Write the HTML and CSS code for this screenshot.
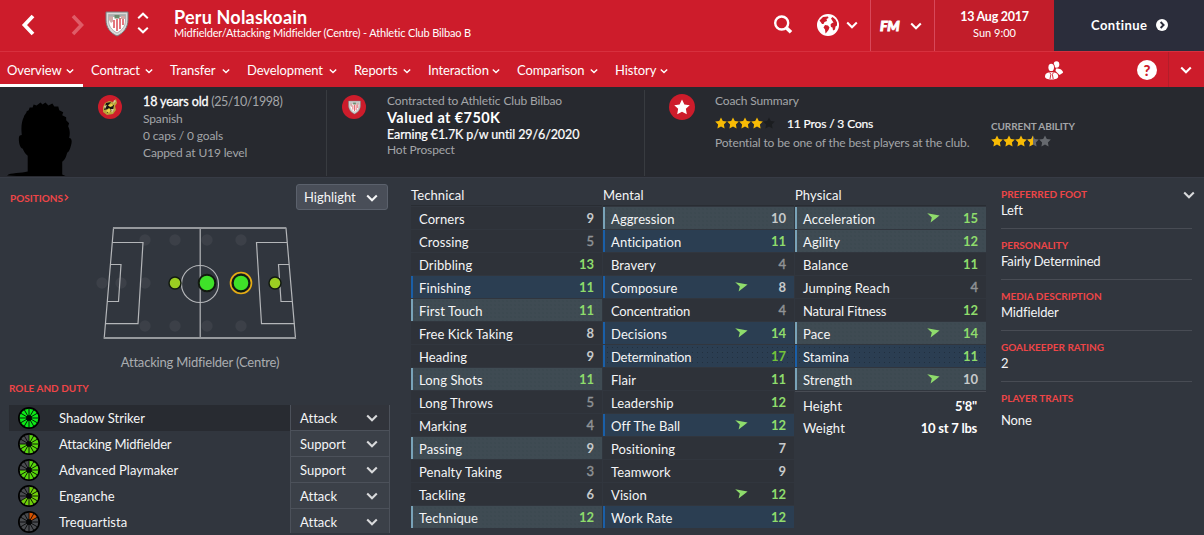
FILE: index.html
```html
<!DOCTYPE html>
<html lang="en">
<head>
<meta charset="utf-8">
<title>Peru Nolaskoain</title>
<link rel="stylesheet" href="styles.css">
</head>
<body>
<svg class="defs" aria-hidden="true">
  <symbol id="chev" viewBox="0 0 12 8"><path d="M1.200 1.600 6 6.200l4.800-4.600" fill="none" stroke="currentColor" stroke-width="2.100"/></symbol>
  <symbol id="arrow" viewBox="0 0 13 10"><path d="M.2.3 12.600 2.400 3.600 9.400 4.800 4.600z" fill="#8fdc6c"/></symbol>
  <symbol id="star" viewBox="0 0 12 12"><path d="M6 .4 7.800 4.100l4 .5-2.900 2.800.7 4L6 9.500l-3.600 1.900.7-4L.2 4.600l4-.5z" fill="currentColor"/></symbol>
  <symbol id="crest" viewBox="0 0 24 26">
    <path d="M1 1h22v8c0 7-4 13-11 16C5 22 1 16 1 9z" fill="#d9dad8" stroke="#77797b" stroke-width="1"/>
    <path d="M3.500 3.500h17v5.500c0 6-3 10-8.500 13C6.500 19 3.500 15 3.500 9z" fill="#fff" stroke="#999" stroke-width=".7"/>
    <path d="M9 9v8M12 8v12M15 7v11M18 7v7" stroke="#dc4b55" stroke-width="1.500"/>
    <path d="M4 4h16v2H4z" fill="#a9aeae"/><path d="M9.500 4h5v3.500h-5z" fill="#6d8a6d"/><path d="M4 5.500h4v5L6 12 4 9zM16 5h4v3h-4z" fill="#d4aaa7"/>
  </symbol>
  <symbol id="spokes" viewBox="0 0 22 22"><g stroke="#050607" stroke-width=".9"><path d="M11 1v20M1 11h20M6 2.340l10 17.320M2.340 6l17.320 10M2.340 16 19.660 6M6 19.660 16 2.340"/></g><circle cx="11" cy="11" r="2.600" fill="#050607"/></symbol>
</svg>

<header class="top">
  <div class="back"><svg width="14" height="22" viewBox="0 0 14 22"><path d="M12 2 3.500 11l8.500 9" fill="none" stroke="#fff" stroke-width="3.800"/></svg></div>
  <div class="fwd"><svg width="14" height="22" viewBox="0 0 14 22"><path d="M2 2l8.500 9L2 20" fill="none" stroke="#df5c67" stroke-width="3.600"/></svg></div>
  <svg class="club" width="24" height="26"><use href="#crest"/></svg>
  <svg class="updown" width="12" height="22" viewBox="0 0 12 22" fill="none" stroke="#fff" stroke-width="2"><path d="M1.200 6.300 6 1.700l4.800 4.600M1.200 15.700 6 20.300l4.800-4.600"/></svg>
  <div class="who"><h1>Peru Nolaskoain</h1><p>Midfielder/Attacking Midfielder (Centre) - Athletic Club Bilbao B</p></div>
  <div class="tools">
    <svg width="20" height="20" viewBox="0 0 20 20" fill="none" stroke="#fff"><circle cx="8.700" cy="8" r="6.500" stroke-width="2.400"/><path d="M13 12.500l5 4.800" stroke-width="3.600"/></svg>
    <svg class="globe" width="22" height="22" viewBox="0 0 22 22"><circle cx="11" cy="11" r="11" fill="#fff"/><path d="M2.500 6.500 6 3l5-.5.5 1.500-2 1 .5 2-2.500 1-1 2H5L4 8.500zM8 11l3 .5 1.500 2-1 2.500-2 2.500-1 1-.5-4-1.500-2zM14 4.500l1.500-1.500 3 2.500 1.500 3v3l-1.500 1-.5 3-2 1-.5-3-1.500-.5-.5-2.500 1.500-1.500 1.500-.5-1-1.500z" fill="#cd1c2b"/></svg>
    <svg class="chev-top" width="12" height="8"><use href="#chev"/></svg>
  </div>
  <div class="fm"><b>FM</b><svg width="12" height="8"><use href="#chev"/></svg></div>
  <div class="date"><b>13 Aug 2017</b><span>Sun 9:00</span></div>
  <div class="continue"><b>Continue</b><svg width="12" height="12" viewBox="0 0 12 12"><circle cx="6" cy="6" r="6" fill="#fff"/><path d="M4.600 3l3 3-3 3" fill="none" stroke="#2b2d3b" stroke-width="1.900"/></svg></div>
</header>

<nav class="nav">
  <a class="n1 on">Overview<svg><use href="#chev"/></svg></a>
  <a class="n2">Contract<svg><use href="#chev"/></svg></a>
  <a class="n3">Transfer<svg><use href="#chev"/></svg></a>
  <a class="n4">Development<svg><use href="#chev"/></svg></a>
  <a class="n5">Reports<svg><use href="#chev"/></svg></a>
  <a class="n6">Interaction<svg><use href="#chev"/></svg></a>
  <a class="n7">Comparison<svg><use href="#chev"/></svg></a>
  <a class="n8">History<svg><use href="#chev"/></svg></a>
  <div class="nav-icons">
    <svg class="people" width="18" height="19" viewBox="0 0 18 19" fill="#fff"><ellipse cx="11.500" cy="3.500" rx="2.800" ry="3.300"/><path d="M11 7.500c4 0 7 1.500 7 4.200L14.500 14l-4-4z"/><ellipse cx="6.200" cy="6.500" rx="3.700" ry="4.500" fill="#cd1c2b"/><ellipse cx="6.200" cy="6.400" rx="2.800" ry="3.700"/><path d="M0 15.500c0-3 2.500-4.200 6.500-4.200s6.700 1.200 6.700 4.200c0 1.800-2.500 3-6.700 3S0 17.300 0 15.500z"/><path d="M4.800 11.500l1 2-.8 4.500M8.400 11.500l-1 2 .8 4.500" stroke="#cd1c2b" stroke-width=".9" fill="none"/></svg>
    <span class="help">?</span>
    <span class="more"><svg width="12" height="8"><use href="#chev"/></svg></span>
  </div>
</nav>

<section class="info">
  <svg class="face" width="72" height="80" viewBox="0 0 72 80"><path d="M0 80c3-3 15-2 21-4V60c-3-2-4-5-5-7-3-1-4-6-4-10 0-3 1-4 3-4-1-8 0-14 2-18 0-2 3-4 3-6l2-1 1-3 3 0 1-3 3 1 4-3 2 2 3-2 3 3 4-2 2 3 4 0 1 4 4 2-1 3 4 2 0 3 3 3-1 3c2 4 2 8 1 12 3 0 3 4 2 7-1 4-2 7-4 8-1 4-2 7-5 9v13c5 3 11 3 15 5z" fill="#000"/></svg>
  <div class="card bio">
    <div class="disc"><svg width="16" height="18" viewBox="0 0 16 18"><path d="M3 5 7 3l4 1 3-3 1 4-2 3 1 4-3 4-6 1-4-3V9z" fill="#b9a33a"/><path d="M4 5l5-1-3 4 6-1-1 5-6 3 1-4-4 1z" fill="#161512"/><path d="M12 2l2 1-3 3zM2 8l3-1-2 4zM9 11l3 0-2 4z" fill="#d8c8a0"/><path d="M4 13l3-3 2 2-2 3zM6 7l4-1 1 2-3 1z" fill="#ecd94b"/></svg></div>
    <div><p class="lead"><b>18 years old</b> (25/10/1998)</p><p>Spanish</p><p>0 caps / 0 goals</p><p>Capped at U19 level</p></div>
  </div>
  <div class="card deal">
    <div class="disc"><svg width="13" height="15"><use href="#crest"/></svg></div>
    <div><p>Contracted to Athletic Club Bilbao</p><p class="value">Valued at €750K</p><p class="wage">Earning €1.7K p/w until 29/6/2020</p><p>Hot Prospect</p></div>
  </div>
  <div class="card coach">
    <div class="disc big"><svg width="16" height="16" viewBox="0 0 12 12"><use href="#star"/></svg></div>
    <div><p>Coach Summary</p>
      <p class="pros"><span class="stars"><svg><use href="#star"/></svg><svg><use href="#star"/></svg><svg><use href="#star"/></svg><svg><use href="#star"/></svg><svg class="dark"><use href="#star"/></svg></span><span>11 Pros / 3 Cons</span></p>
      <p class="potential">Potential to be one of the best players at the club.</p></div>
  </div>
  <div class="ability"><b>CURRENT ABILITY</b><span class="stars"><svg><use href="#star"/></svg><svg><use href="#star"/></svg><svg><use href="#star"/></svg><svg class="half" viewBox="0 0 12 12"><path d="M6 .4 7.800 4.100l4 .5-2.900 2.800.7 4L6 9.500l-3.600 1.900.7-4L.2 4.600l4-.5z" fill="#66696e"/><path d="M6 .4V9.500l-3.600 1.900.7-4L.2 4.600l4-.5z" fill="#f8bb05"/></svg><svg class="grey"><use href="#star"/></svg></span></div>
</section>

<main class="main">
  <section class="left">
    <div class="pos-head"><h2>POSITIONS<svg width="5" height="7" viewBox="0 0 5 7"><path d="M1 .7l2.800 2.800L1 6.300" fill="none" stroke="currentColor" stroke-width="1.400"/></svg></h2><div class="highlight">Highlight<svg width="12" height="8"><use href="#chev"/></svg></div></div>
    <svg class="pitch" width="216" height="124" viewBox="90 220 216 124">
      <g fill="#3c4048"><circle cx="145" cy="240" r="5.700"/><circle cx="175" cy="240" r="5.700"/><circle cx="207" cy="240" r="5.700"/><circle cx="241" cy="240" r="5.700"/><circle cx="102" cy="283" r="5.700"/><circle cx="121" cy="283" r="5.700"/><circle cx="145" cy="283" r="5.700"/><circle cx="145" cy="326" r="5.700"/><circle cx="175" cy="326" r="5.700"/><circle cx="207" cy="326" r="5.700"/><circle cx="241" cy="326" r="5.700"/></g>
      <g fill="none" stroke="#b4b6b9" stroke-width="1.200"><path d="M113.500 228H286l9.500 110.200H104.200z"/><path d="M200.200 228v110"/><path d="M112 242.500h31l-5 81.200h-33M110 264.500h11l-2.500 37H107M287 242.500h-30.500l5 81.200h33M289 264.500h-10.500l2.500 37h11"/><circle cx="200" cy="284" r="18.500"/></g>
      <path d="M113 228h173M104 338h192" stroke="#96999d" stroke-width="2"/>
      <g stroke="#121a10" stroke-width="1.500"><circle cx="175" cy="283" r="6" fill="#9bcd22"/><circle cx="275" cy="283" r="6" fill="#9bcd22"/><circle cx="207" cy="283" r="8.300" fill="#3fe229" stroke-width="2"/><circle cx="241" cy="283" r="8.300" fill="#3fe229" stroke-width="2"/></g>
      <circle cx="241" cy="283" r="10.500" fill="none" stroke="#e7ad12" stroke-width="1.600"/>
    </svg>
    <p class="pos-name">Attacking Midfielder (Centre)</p>
    <h2 class="role-title">ROLE AND DUTY</h2>
    <div class="roles">
      <div class="role sel"><svg class="wheel" viewBox="0 0 22 22"><circle cx="11" cy="11" r="11"/><circle class="w f12" cx="11" cy="11" r="6"/><use href="#spokes"/></svg><span>Shadow Striker</span><div class="duty">Attack<svg><use href="#chev"/></svg></div></div>
      <div class="role"><svg class="wheel" viewBox="0 0 22 22"><circle cx="11" cy="11" r="11"/><circle class="w" cx="11" cy="11" r="6"/><circle class="w f9" pathLength="12" cx="11" cy="11" r="6"/><use href="#spokes"/></svg><span class="tight">Attacking Midfielder</span><div class="duty">Support<svg><use href="#chev"/></svg></div></div>
      <div class="role"><svg class="wheel" viewBox="0 0 22 22"><circle cx="11" cy="11" r="11"/><circle class="w" cx="11" cy="11" r="6"/><circle class="w f9" pathLength="12" cx="11" cy="11" r="6"/><use href="#spokes"/></svg><span>Advanced Playmaker</span><div class="duty">Support<svg><use href="#chev"/></svg></div></div>
      <div class="role"><svg class="wheel" viewBox="0 0 22 22"><circle cx="11" cy="11" r="11"/><circle class="w" cx="11" cy="11" r="6"/><circle class="w f8" pathLength="12" cx="11" cy="11" r="6"/><use href="#spokes"/></svg><span>Enganche</span><div class="duty">Attack<svg><use href="#chev"/></svg></div></div>
      <div class="role"><svg class="wheel" viewBox="0 0 22 22"><circle cx="11" cy="11" r="11"/><circle class="w" cx="11" cy="11" r="6"/><circle class="w f2" pathLength="12" cx="11" cy="11" r="6"/><use href="#spokes"/></svg><span>Trequartista</span><div class="duty">Attack<svg><use href="#chev"/></svg></div></div>
    </div>
  </section>

  <section class="attrs">
    <div class="col">
      <h3>Technical</h3>
      <div class="row">Corners<b>9</b></div>
      <div class="row">Crossing<b class="low">5</b></div>
      <div class="row">Dribbling<b class="good">13</b></div>
      <div class="row key">Finishing<b class="good">11</b></div>
      <div class="row pref">First Touch<b class="good">11</b></div>
      <div class="row">Free Kick Taking<b>8</b></div>
      <div class="row">Heading<b>9</b></div>
      <div class="row pref">Long Shots<b class="good">11</b></div>
      <div class="row">Long Throws<b class="low">5</b></div>
      <div class="row">Marking<b class="low">4</b></div>
      <div class="row pref">Passing<b>9</b></div>
      <div class="row">Penalty Taking<b class="low">3</b></div>
      <div class="row">Tackling<b>6</b></div>
      <div class="row pref">Technique<b class="good">12</b></div>
    </div>
    <div class="col">
      <h3>Mental</h3>
      <div class="row pref">Aggression<b>10</b></div>
      <div class="row key">Anticipation<b class="good">11</b></div>
      <div class="row">Bravery<b class="low">4</b></div>
      <div class="row key">Composure<svg><use href="#arrow"/></svg><b>8</b></div>
      <div class="row tight">Concentration<b class="low">4</b></div>
      <div class="row key">Decisions<svg><use href="#arrow"/></svg><b class="good">14</b></div>
      <div class="row key dots tight">Determination<b class="great">17</b></div>
      <div class="row">Flair<b class="good">11</b></div>
      <div class="row">Leadership<b class="good">12</b></div>
      <div class="row key">Off The Ball<svg><use href="#arrow"/></svg><b class="good">12</b></div>
      <div class="row">Positioning<b>7</b></div>
      <div class="row">Teamwork<b>9</b></div>
      <div class="row">Vision<svg><use href="#arrow"/></svg><b class="good">12</b></div>
      <div class="row key">Work Rate<b class="good">12</b></div>
    </div>
    <div class="col">
      <h3>Physical</h3>
      <div class="row pref">Acceleration<svg><use href="#arrow"/></svg><b class="good">15</b></div>
      <div class="row pref">Agility<b class="good">12</b></div>
      <div class="row">Balance<b class="good">11</b></div>
      <div class="row">Jumping Reach<b class="low">4</b></div>
      <div class="row tight">Natural Fitness<b class="good">12</b></div>
      <div class="row pref">Pace<svg><use href="#arrow"/></svg><b class="good">14</b></div>
      <div class="row key dots">Stamina<b class="good">11</b></div>
      <div class="row pref">Strength<svg><use href="#arrow"/></svg><b>10</b></div>
      <div class="body"><div>Height<b>5'8"</b></div><div>Weight<b>10 st 7 lbs</b></div></div>
    </div>
  </section>

  <aside class="side">
    <svg class="side-chev" width="12" height="8"><use href="#chev"/></svg>
    <div class="fact"><h2>PREFERRED FOOT</h2><p>Left</p></div>
    <div class="fact"><h2>PERSONALITY</h2><p>Fairly Determined</p></div>
    <div class="fact"><h2>MEDIA DESCRIPTION</h2><p>Midfielder</p></div>
    <div class="fact"><h2>GOALKEEPER RATING</h2><p>2</p></div>
    <div class="fact traits"><h2>PLAYER TRAITS</h2><p>None</p></div>
  </aside>
</main>
</body>
</html>
```
FILE: styles.css
```css
* { box-sizing: border-box; }
body { margin: 0; width: 1204px; height: 535px; overflow: hidden; background: #31363e; color: #f4f5f6; font: 13px/17px Lato, "Liberation Sans", sans-serif; letter-spacing: .1px; }
h1, h2, h3, p { margin: 0; }
svg { display: block; flex: none; }
.defs { position: absolute; width: 0; height: 0; }

.top { display: flex; height: 51px; background: #cd1c2b; color: #fff; }
.back { padding: 14px 0 0 21px; width: 71px; }
.fwd { padding-top: 14px; width: 34px; }
.club { margin-top: 11px; }
.updown { margin: 12px 0 0 8px; }
.who { margin-left: 25px; padding-top: 7px; flex: 1; }
.who h1 { font-size: 18px; line-height: 20px; font-weight: 700; letter-spacing: .2px; }
.who p { font-size: 11px; line-height: 12px; letter-spacing: -.16px; }
.tools { display: flex; width: 97px; padding-top: 15px; }
.globe { margin: -1px 0 0 24px; }
.tools .chev-top { margin: 6px 0 0 7px; }
.fm { width: 64px; display: flex; align-items: center; gap: 8px; padding-left: 9px; background: #c21d2a; border-left: 1px solid #d8485a; }
.fm b { font: italic 900 14px/16px Lato, sans-serif; letter-spacing: -.2px; width: 22px; -webkit-text-stroke: .9px #fff; }
.date { width: 120px; border-left: 1px solid #d8485a; background: #c21d2a; text-align: center; padding-top: 8px; }
.date b { display: block; font-size: 12.500px; line-height: 18px; letter-spacing: -.25px; }
.date span { display: block; font-size: 11px; line-height: 13px; letter-spacing: 0; }
.continue { width: 150px; display: flex; background: #2b2d3b; padding: 17px 0 0 37px; gap: 8px; }
.continue svg { margin-top: 2px; }
.continue b { font-size: 13px; letter-spacing: .45px; }

.nav { display: flex; height: 36px; background: #cd1c2b; border-top: 1px solid #d7303e; color: #fff; padding-left: 7px; letter-spacing: -.1px; }
.nav a { display: flex; justify-content: space-between; align-items: center; padding: 2px 17px 0 0; height: 35px; }
.nav a svg { width: 8px; height: 6px; margin-top: 1px; }
.n1 { width: 84px; } .n2 { width: 79px; } .n3 { width: 77px; } .n4 { width: 107px; } .n5 { width: 74px; } .n6 { width: 89px; } .n7 { width: 98px; } .n8 { width: 70px; }
.nav .on { margin-left: -7px; width: 83px; padding: 5px 9px 0 7px; border-bottom: 3px solid #fff; margin-right: 8px; }
.nav-icons { display: flex; margin-left: auto; }
.people { margin: 9px 74px 0 0; }
.help { width: 20px; height: 20px; margin: 8px 11px 0 0; border-radius: 50%; background: #fff; color: #cd1c2b; font: 900 15px/20px Lato, sans-serif; letter-spacing: 0; text-align: center; }
.more { width: 36px; border-left: 1px solid #b31d2a; padding: 14px 0 0 11px; }

.info { display: flex; height: 91px; background: #27292f; border-bottom: 1px solid #373b45; color: #a3a5a8; font-size: 12px; letter-spacing: -.14px; }
.face { margin: 9px 0 0 7px; width: 71px; }
.card { display: flex; height: 86px; margin-top: 3px; }
.disc { width: 24px; height: 24px; border-radius: 50%; background: #cd1c2b; display: grid; place-items: center; color: #fff; flex: none; margin-top: 5px; }
.big { width: 26px; height: 26px; margin-top: 4px; }
.bio { width: 249px; padding-left: 20px; gap: 21px; border-right: 1px solid #383b40; }
.bio p { line-height: 17px; }
.bio .lead { padding-top: 3px; line-height: 17px; font-size: 12.500px; letter-spacing: -.4px; }
.bio .lead b { color: #fff; font-weight: 400; -webkit-text-stroke: .3px #fff; letter-spacing: -.1px; }
.deal { width: 318px; padding-left: 15px; gap: 21px; border-right: 1px solid #383b40; }
.deal p { line-height: 14px; }
.deal p:first-child { padding-top: 2px; line-height: 17px; }
.deal .value { color: #fff; font-size: 14.500px; font-weight: 700; line-height: 18px; letter-spacing: .4px; }
.deal .wage { color: #fff; font-size: 12.500px; line-height: 16px; -webkit-text-stroke: .2px #fff; letter-spacing: -.1px; }
.coach { width: 346px; padding-left: 24px; gap: 20px; }
.coach p:first-child { padding-top: 2px; }
.pros { display: flex; gap: 12px; align-items: center; color: #fff; height: 28px; -webkit-text-stroke: .2px #fff; }
.stars { display: flex; color: #f8bb05; width: 60px; -webkit-text-stroke: 0; }
.stars svg { width: 12px; height: 12px; }
.stars .dark { color: #1b1d20; }
.stars .grey { color: #66696e; }
.potential { line-height: 11px; }
.ability { padding-top: 32px; }
.ability b { display: block; font-size: 10px; line-height: 14px; letter-spacing: -.1px; margin-bottom: 2px; }

.main { display: flex; height: 357px; }
h2 { color: #ee4547; font-size: 10px; line-height: 14px; font-weight: 700; letter-spacing: 0; }
.left { width: 411px; padding-left: 9px; }
.pos-head { display: flex; justify-content: space-between; padding: 6px 23px 0 1px; height: 42px; }
.pos-head h2 { display: flex; padding-top: 7px; gap: 1px; }
.pos-head h2 svg { margin-top: 3px; }
.highlight { width: 92px; height: 26px; display: flex; justify-content: space-between; padding: 4px 9px 0 7px; background: #494e58; border: 1px solid #5b616c; border-radius: 3px; letter-spacing: 0; }
.highlight svg { margin-top: 5px; }
.pitch { margin-left: 81px; }
.pos-name { width: 382px; text-align: center; color: #aaadb0; margin-top: 10px; letter-spacing: -.2px; }
.role-title { margin-top: 10px; }
.roles { height: 128px; margin-top: 10px; overflow: hidden; letter-spacing: .03px; }
.role { width: 381px; height: 26px; display: flex; align-items: center; }
.role.sel { background: #282b31; }
.role span { flex: 1; margin-left: 19px; }
.role .tight { letter-spacing: -.2px; }
.wheel { width: 22px; height: 22px; margin-left: 9px; }
.wheel .w { fill: none; stroke: #4a4c50; stroke-width: 6.600px; transform: rotate(-90deg); transform-origin: 11px 11px; }
.wheel .f12 { stroke: #0cea18; }
.wheel .f9 { stroke: #58d80b; stroke-dasharray: 9 12; }
.wheel .f8 { stroke: #6fcf08; stroke-dasharray: 8 12; }
.wheel .f2 { stroke: #d45303; stroke-dasharray: 2 12; }
.duty { width: 100px; height: 26px; display: flex; align-items: center; justify-content: space-between; padding: 1px 11px 0 9px; background: #3b4048; border: solid #4c515a; border-width: 0 1px 1px; }
.sel .duty { background: #31343b; }
.duty svg { width: 12px; height: 8px; color: #d9dadc; }

.attrs { display: flex; gap: 1px; width: 575px; flex: none; }
.col { width: 191px; }
h3 { font-size: 13px; line-height: 17px; font-weight: 400; padding-top: 9px; height: 28px; border-bottom: 1px solid #292d33; margin-bottom: 1px; }
.row { display: flex; align-items: center; height: 22px; margin-bottom: 1px; border-left: 2px solid transparent; padding: 2px 8px 0 6px; background: #2e3239; }
.row.tight { letter-spacing: -.18px; }
.row b { margin-left: auto; width: 43px; text-align: right; color: #c7cacb; line-height: 17px; margin-top: -1px; letter-spacing: 0; }
.row svg { width: 13px; height: 10px; margin: -2px 0 0 auto; }
.row svg + b { margin-left: 0; width: 38px; }
.row .low { color: #909396; font-weight: 400; -webkit-text-stroke: .4px #909396; }
.row .good { color: #8fdc6c; }
.row .great { color: #74c33a; }
.key { background: #2b3e52; border-left-color: #1a5fa8; }
.pref { background: radial-gradient(#39464d .5px, transparent .8px) 0 0 / 4px 4px #3f4b53; border-left-color: #79a3b8; }
.dots { background: radial-gradient(#22303f .6px, transparent .9px) 0 0 / 5px 5px #2b3e52; }
.body { border-top: 1px solid #484c54; padding-top: 3px; }
.body div { display: flex; justify-content: space-between; height: 22px; line-height: 22px; padding: 0 9px 0 8px; }
.body b { color: #fff; letter-spacing: -.25px; }

.side { width: 218px; padding: 9px 0 0 15px; position: relative; letter-spacing: -.12px; }
.side-chev { position: absolute; right: 9px; top: 13px; color: #d9dadc; }
.fact { width: 191px; height: 51px; display: flex; flex-direction: column; }
.fact::after { content: ""; display: block; height: 1px; background: #484c54; margin-top: 9px; }
.fact p { line-height: 17px; padding-top: 1px; }
.traits::after { display: none; }
.traits p { margin-top: 6px; }
```
